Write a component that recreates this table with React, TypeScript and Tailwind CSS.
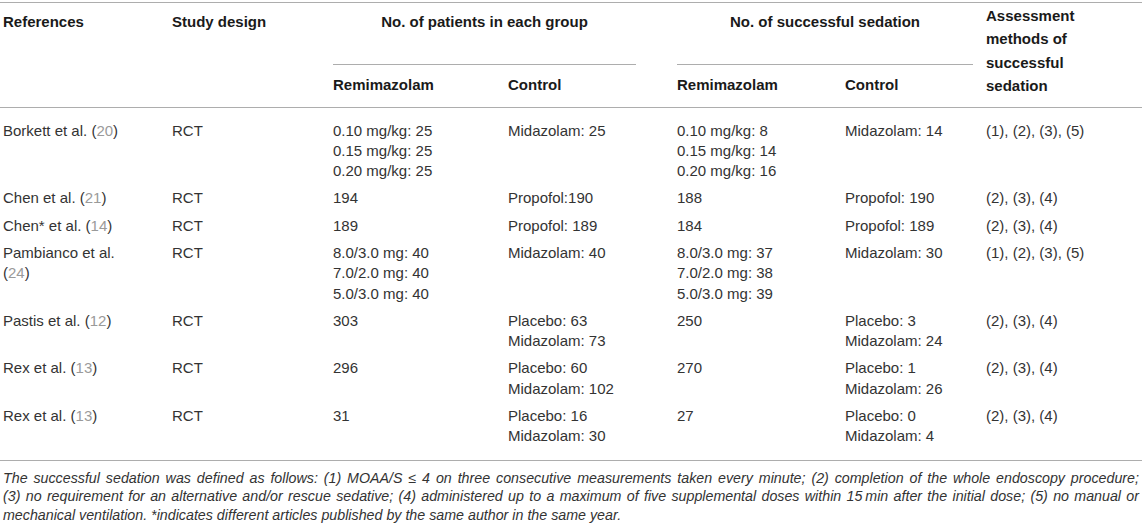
import React from "react";

const Ref = ({ name, n }: { name: string; n: string }) => (
  <span>
    {name} (<span className="text-[#9a9a9a]">{n}</span>)
  </span>
);

type Row = {
  ref: React.ReactNode;
  design: string;
  pr: string[];
  pc: string[];
  sr: string[];
  sc: string[];
  am: string;
};

const rows: Row[] = [
  {
    ref: <Ref name="Borkett et al." n="20" />,
    design: "RCT",
    pr: ["0.10 mg/kg: 25", "0.15 mg/kg: 25", "0.20 mg/kg: 25"],
    pc: ["Midazolam: 25"],
    sr: ["0.10 mg/kg: 8", "0.15 mg/kg: 14", "0.20 mg/kg: 16"],
    sc: ["Midazolam: 14"],
    am: "(1), (2), (3), (5)",
  },
  {
    ref: <Ref name="Chen et al." n="21" />,
    design: "RCT",
    pr: ["194"],
    pc: ["Propofol:190"],
    sr: ["188"],
    sc: ["Propofol: 190"],
    am: "(2), (3), (4)",
  },
  {
    ref: <Ref name="Chen* et al." n="14" />,
    design: "RCT",
    pr: ["189"],
    pc: ["Propofol: 189"],
    sr: ["184"],
    sc: ["Propofol: 189"],
    am: "(2), (3), (4)",
  },
  {
    ref: (
      <span>
        Pambianco et al.
        <br />(<span className="text-[#9a9a9a]">24</span>)
      </span>
    ),
    design: "RCT",
    pr: ["8.0/3.0 mg: 40", "7.0/2.0 mg: 40", "5.0/3.0 mg: 40"],
    pc: ["Midazolam: 40"],
    sr: ["8.0/3.0 mg: 37", "7.0/2.0 mg: 38", "5.0/3.0 mg: 39"],
    sc: ["Midazolam: 30"],
    am: "(1), (2), (3), (5)",
  },
  {
    ref: <Ref name="Pastis et al." n="12" />,
    design: "RCT",
    pr: ["303"],
    pc: ["Placebo: 63", "Midazolam: 73"],
    sr: ["250"],
    sc: ["Placebo: 3", "Midazolam: 24"],
    am: "(2), (3), (4)",
  },
  {
    ref: <Ref name="Rex et al." n="13" />,
    design: "RCT",
    pr: ["296"],
    pc: ["Placebo: 60", "Midazolam: 102"],
    sr: ["270"],
    sc: ["Placebo: 1", "Midazolam: 26"],
    am: "(2), (3), (4)",
  },
  {
    ref: <Ref name="Rex et al." n="13" />,
    design: "RCT",
    pr: ["31"],
    pc: ["Placebo: 16", "Midazolam: 30"],
    sr: ["27"],
    sc: ["Placebo: 0", "Midazolam: 4"],
    am: "(2), (3), (4)",
  },
];

const Lines = ({ items }: { items: string[] }) => (
  <>
    {items.map((t, i) => (
      <div key={i}>{t}</div>
    ))}
  </>
);

export default function App() {
  return (
    <div
      className="w-[1145px] h-[526px] bg-white pt-[2px] overflow-hidden text-[#333] text-[15px] leading-[20.3px]"
      style={{ fontFamily: '"Liberation Sans", Arial, sans-serif' }}
    >
      <table className="w-[1142px] table-fixed border-collapse border-t border-[#adadad]">
        <colgroup>
          <col className="w-[169px]" />
          <col className="w-[161px]" />
          <col className="w-[175px]" />
          <col className="w-[169px]" />
          <col className="w-[168px]" />
          <col className="w-[141px]" />
          <col className="w-[159px]" />
        </colgroup>
        <thead className="font-bold text-[#1a1a1a] leading-[20px]">
          <tr className="h-[62px]">
            <th rowSpan={2} className="align-top text-left font-bold pl-[3px] pt-[9px]">
              References
            </th>
            <th rowSpan={2} className="align-top text-left font-bold pl-[3px] pt-[9px]">
              Study design
            </th>
            <th colSpan={2} className="align-top p-0 font-bold">
              <div className="h-[62px] ml-[3px] mr-[38px] border-b border-[#adadad] pt-[9px] text-center">
                No. of patients in each group
              </div>
            </th>
            <th colSpan={2} className="align-top p-0 font-bold">
              <div className="h-[62px] ml-[3px] mr-[10px] border-b border-[#adadad] pt-[9px] text-center">
                No. of successful sedation
              </div>
            </th>
            <th
              rowSpan={2}
              className="align-top text-left font-bold pl-[3px] pt-[1px] leading-[23.3px] border-b border-[#adadad]"
            >
              Assessment
              <br />
              methods of
              <br />
              successful
              <br />
              sedation
            </th>
          </tr>
          <tr className="h-[42px] border-b border-[#adadad]">
            <th className="align-top text-left font-bold pl-[3px] pt-[10px]">Remimazolam</th>
            <th className="align-top text-left font-bold pl-[3px] pt-[10px]">Control</th>
            <th className="align-top text-left font-bold pl-[3px] pt-[10px]">Remimazolam</th>
            <th className="align-top text-left font-bold pl-[3px] pt-[10px]">Control</th>
          </tr>
        </thead>
        <tbody>
          {rows.map((r, i) => {
            const pt = i === 0 ? "pt-[13px]" : "pt-[4px]";
            const pb = i === rows.length - 1 ? "pb-[13px]" : "pb-[3px]";
            const cell = `align-top text-left pl-[3px] ${pt} ${pb}`;
            return (
              <tr key={i}>
                <td className={cell}>{r.ref}</td>
                <td className={cell}>{r.design}</td>
                <td className={cell}>
                  <Lines items={r.pr} />
                </td>
                <td className={cell}>
                  <Lines items={r.pc} />
                </td>
                <td className={cell}>
                  <Lines items={r.sr} />
                </td>
                <td className={cell}>
                  <Lines items={r.sc} />
                </td>
                <td className={cell}>{r.am}</td>
              </tr>
            );
          })}
        </tbody>
      </table>
      <div className="w-[1142px] border-t border-[#adadad] pt-[8px] pl-[3px] pr-[3px] italic text-[14.25px] leading-[18.5px] text-[#333]">
        <div className="text-justify [text-align-last:justify]">
          The successful sedation was defined as follows: (1) MOAA/S ≤ 4 on three consecutive measurements taken every minute; (2) completion of the whole endoscopy procedure;
        </div>
        <div className="text-justify [text-align-last:justify]">
          (3) no requirement for an alternative and/or rescue sedative; (4) administered up to a maximum of five supplemental doses within 15{"\u2009"}min after the initial dose; (5) no manual or
        </div>
        <div>
          mechanical ventilation. *indicates different articles published by the same author in the same year.
        </div>
      </div>
    </div>
  );
}
